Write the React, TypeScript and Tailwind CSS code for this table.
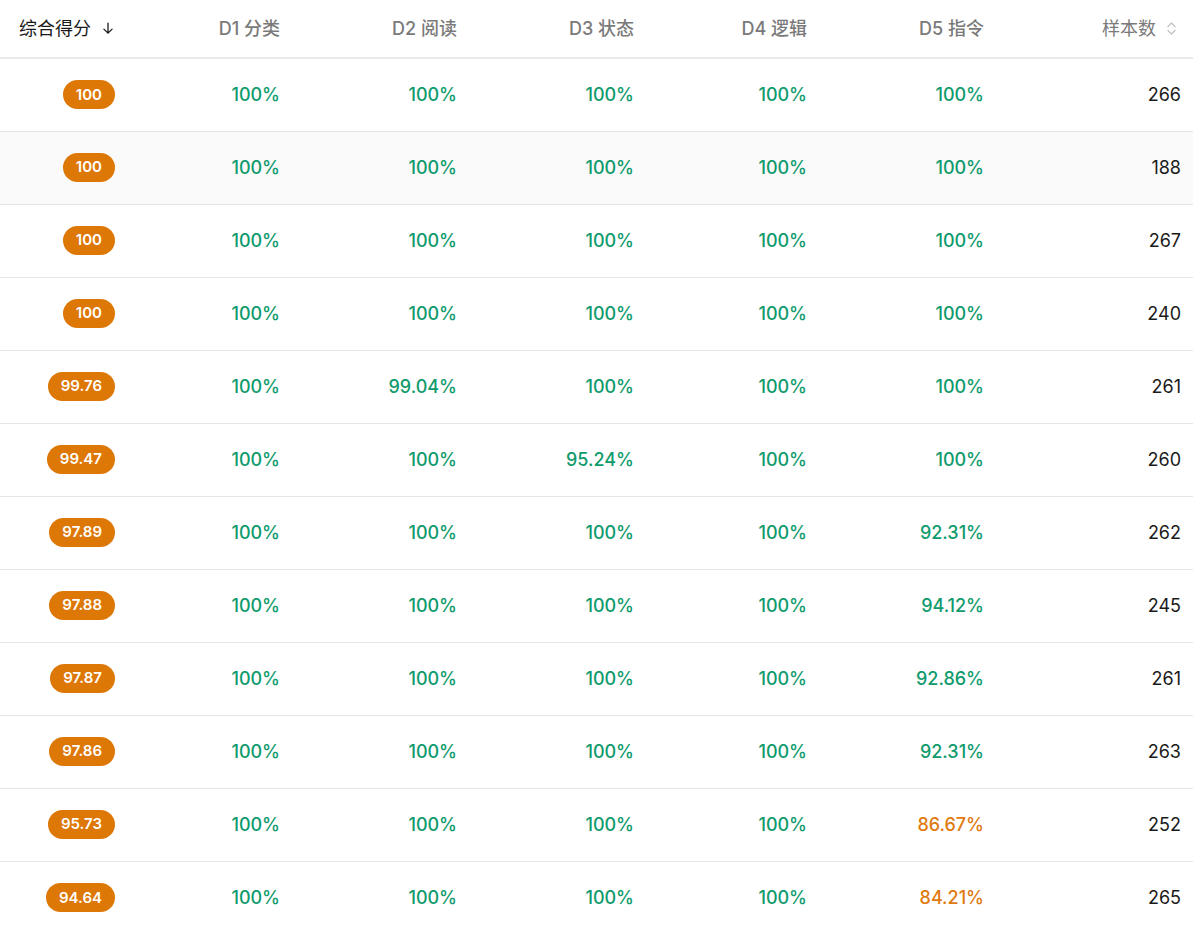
import React from 'react';

// ============================================
// DATA
// ============================================
type Row = { score: string; d: string[]; n: number };

const ROWS: Row[] = [
  { score: '100', d: ['100%', '100%', '100%', '100%', '100%'], n: 266 },
  { score: '100', d: ['100%', '100%', '100%', '100%', '100%'], n: 188 },
  { score: '100', d: ['100%', '100%', '100%', '100%', '100%'], n: 267 },
  { score: '100', d: ['100%', '100%', '100%', '100%', '100%'], n: 240 },
  { score: '99.76', d: ['100%', '99.04%', '100%', '100%', '100%'], n: 261 },
  { score: '99.47', d: ['100%', '100%', '95.24%', '100%', '100%'], n: 260 },
  { score: '97.89', d: ['100%', '100%', '100%', '100%', '92.31%'], n: 262 },
  { score: '97.88', d: ['100%', '100%', '100%', '100%', '94.12%'], n: 245 },
  { score: '97.87', d: ['100%', '100%', '100%', '100%', '92.86%'], n: 261 },
  { score: '97.86', d: ['100%', '100%', '100%', '100%', '92.31%'], n: 263 },
  { score: '95.73', d: ['100%', '100%', '100%', '100%', '86.67%'], n: 252 },
  { score: '94.64', d: ['100%', '100%', '100%', '100%', '84.21%'], n: 265 },
];

const DIMS = ['D1 分类', 'D2 阅读', 'D3 状态', 'D4 逻辑', 'D5 指令'];
const WIDTHS = ['w-[165px]', 'w-[177px]', 'w-[177px]', 'w-[173px]', 'w-[177px]'];

// ============================================
// ICONS
// ============================================
const ArrowDown = () => (
  <svg width="14" height="15" viewBox="0 0 24 24" fill="none" stroke="currentColor" strokeWidth="2.2" strokeLinecap="round" strokeLinejoin="round">
    <path d="M12 3v17M5 13l7 7 7-7" />
  </svg>
);

const SortBoth = () => (
  <svg width="11" height="15" viewBox="0 0 11 15" fill="none" stroke="currentColor" strokeWidth="1.4" strokeLinecap="round" strokeLinejoin="round">
    <path d="M2 5.5l3.5-3.5L9 5.5M2 9.5l3.5 3.5L9 9.5" />
  </svg>
);

function pct(v: string) {
  const n = parseFloat(v);
  return n < 90 ? 'text-[#e07a0f]' : 'text-[#0f9b6d]';
}

// ============================================
// APP
// ============================================
export default function App() {
  return (
    <div className="bg-white min-h-[932px] w-[1196px]" style={{ fontFamily: 'Inter, "Noto Sans CJK SC", sans-serif' }}>
      <table className="w-[1193px] table-fixed border-collapse">
        <thead>
          <tr className="h-[58px] border-b-2 border-[#e9e9e9]">
            <th className="w-[131px] pr-4 text-right font-normal text-[18px] text-[#1a1a1a]">
              <span className="inline-flex items-center gap-[10px]">综合得分<ArrowDown /></span>
            </th>
            {DIMS.map((d, i) => (
              <th key={d} className={`${WIDTHS[i]} pr-4 text-right font-medium text-[18px] text-[#7a7a7a]`}>
                {d}
              </th>
            ))}
            <th className="w-[193px] pr-4 text-right font-normal text-[18px] text-[#7a7a7a]">
              <span className="inline-flex items-center gap-[10px]">样本数<span className="text-[#c4c4c4]"><SortBoth /></span></span>
            </th>
          </tr>
        </thead>
        <tbody>
          {ROWS.map((r, i) => (
            <tr key={i} className={`h-[73px] border-b border-[#e6e6e6] ${i === 1 ? 'bg-[#fafafa]' : ''} ${i === ROWS.length - 1 ? 'border-b-0' : ''}`}>
              <td className="pr-4 text-right">
                <span className="inline-flex h-[29px] items-center rounded-full bg-[#dd7706] px-[13px] text-[15px] font-semibold text-white">
                  {r.score}
                </span>
              </td>
              {r.d.map((v, j) => (
                <td key={j} className={`pr-4 text-right text-[18px] font-medium ${pct(v)}`}>{v}</td>
              ))}
              <td className="pr-3 text-right text-[18px] text-[#1a1a1a]">{r.n}</td>
            </tr>
          ))}
        </tbody>
      </table>
    </div>
  );
}
